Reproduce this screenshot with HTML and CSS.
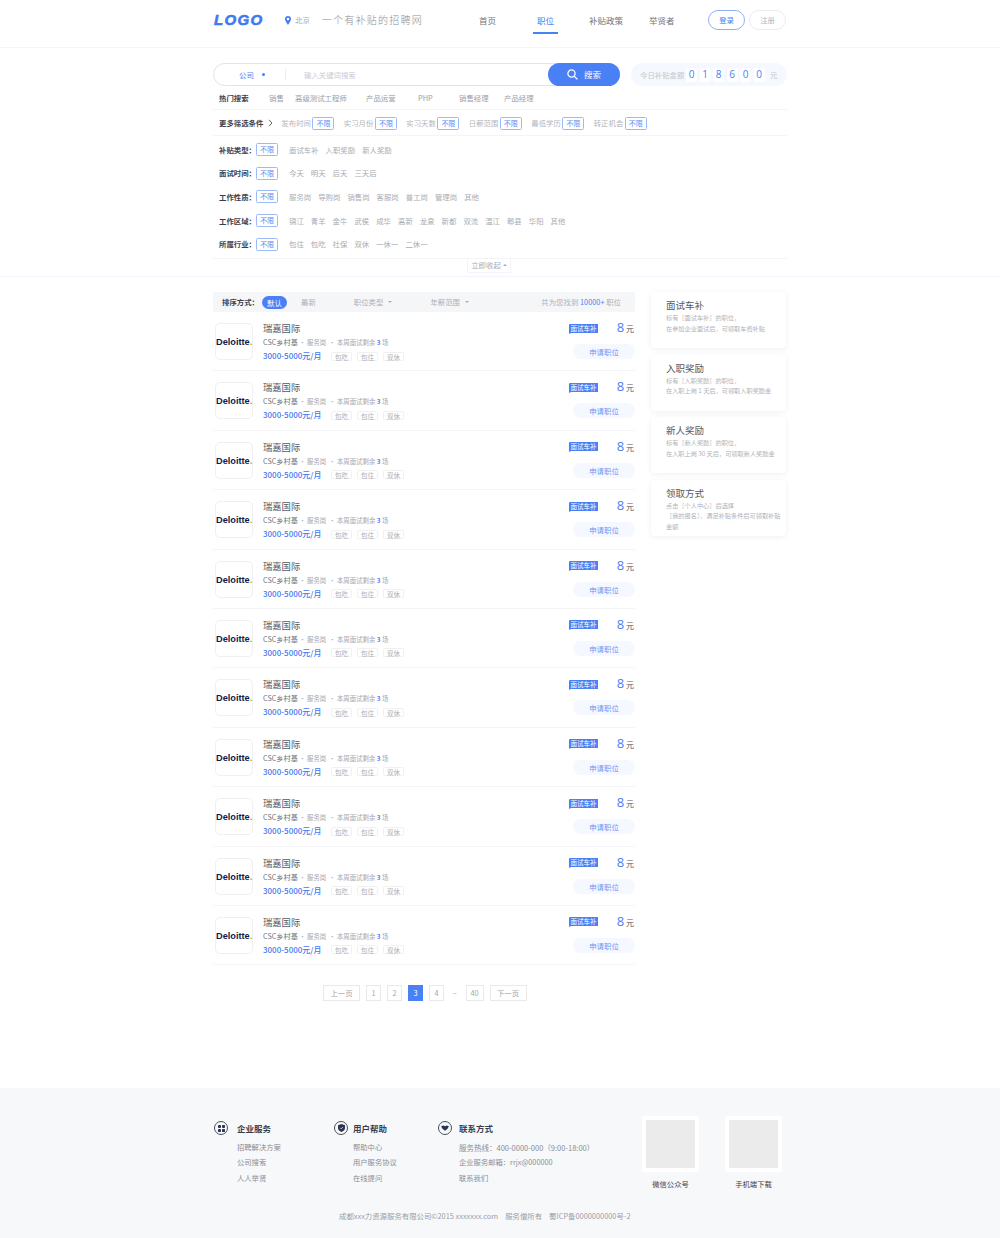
FILE: index.html
```html
<!DOCTYPE html>
<html lang="zh-CN">
<head>
    <meta charset="UTF-8">
    <title>职位</title>
    <link rel="stylesheet" href="styles.css">
</head>
<body>
<header class="top">
    <div class="wrap top_inner">
        <a class="logo">LOGO</a>
        <svg class="pin" width="6" height="9" viewBox="0 0 6 9"><path d="M3 0a3 3 0 0 0-3 3c0 2.2 3 6 3 6s3-3.800 3-6a3 3 0 0 0-3-3zm0 4.200a1.200 1.200 0 1 1 0-2.400 1.200 1.200 0 0 1 0 2.400z" fill="#4a80f5"/></svg>
        <span class="city">北京</span>
        <span class="slogan">一个有补贴的招聘网</span>
        <nav class="nav">
            <a class="nav_item">首页</a>
            <a class="nav_item active">职位</a>
            <a class="nav_item">补贴政策</a>
            <a class="nav_item">举贤者</a>
        </nav>
        <a class="top_btn login">登录</a>
        <a class="top_btn">注册</a>
    </div>
</header>

<section class="filters">
    <div class="wrap">
        <div class="search_row">
            <div class="search">
                <span class="search_type">公司<i class="dot"></i></span>
                <span class="search_text">输入关键词搜索</span>
                <a class="search_btn">
                    <svg width="11" height="11" viewBox="0 0 11 11" fill="none" stroke="#fff" stroke-width="1.300"><circle cx="4.500" cy="4.500" r="3.600"/><path d="M7.200 7.200 10.400 10.400"/></svg>
                    搜索
                </a>
            </div>
            <div class="today">
                <span class="today_label">今日补贴金额</span>
                <b class="digit">0</b><b class="digit">1</b><b class="digit">8</b><b class="digit">6</b><b class="digit">0</b><b class="digit">0</b>
                <span class="today_unit">元</span>
            </div>
        </div>

        <div class="hot">
            <b class="label">热门搜索</b>
            <a>销售</a>
            <a>高级测试工程师</a>
            <a>产品运营</a>
            <a>PHP</a>
            <a>销售经理</a>
            <a>产品经理</a>
        </div>

        <div class="more">
            <b class="label">更多筛选条件</b>
            <svg class="more_arrow" width="5" height="8" viewBox="0 0 5 8" fill="none" stroke="#555" stroke-width="0.900"><path d="M1 .8 4 4 1 7.200"/></svg>
            <span class="more_item">发布时间<i class="any">不限</i></span>
            <span class="more_item">实习月份<i class="any">不限</i></span>
            <span class="more_item">实习天数<i class="any">不限</i></span>
            <span class="more_item">日薪范围<i class="any">不限</i></span>
            <span class="more_item">最低学历<i class="any">不限</i></span>
            <span class="more_item">转正机会<i class="any">不限</i></span>
        </div>

        <div class="opts">
            <div class="opt_row">
                <b class="label opt_label">补贴类型：</b><i class="any">不限</i>
                <div class="opt_list"><a>面试车补</a><a>入职奖励</a><a>新人奖励</a></div>
            </div>
            <div class="opt_row">
                <b class="label opt_label">面试时间：</b><i class="any">不限</i>
                <div class="opt_list"><a>今天</a><a>明天</a><a>后天</a><a>三天后</a></div>
            </div>
            <div class="opt_row">
                <b class="label opt_label">工作性质：</b><i class="any">不限</i>
                <div class="opt_list"><a>服务岗</a><a>导购岗</a><a>销售岗</a><a>客服岗</a><a>普工岗</a><a>管理岗</a><a>其他</a></div>
            </div>
            <div class="opt_row">
                <b class="label opt_label">工作区域：</b><i class="any">不限</i>
                <div class="opt_list"><a>锦江</a><a>青羊</a><a>金牛</a><a>武侯</a><a>成华</a><a>高新</a><a>龙泉</a><a>新都</a><a>双流</a><a>温江</a><a>郫县</a><a>华阳</a><a>其他</a></div>
            </div>
            <div class="opt_row">
                <b class="label opt_label">所属行业：</b><i class="any">不限</i>
                <div class="opt_list"><a>包住</a><a>包吃</a><a>社保</a><a>双休</a><a>一休一</a><a>二休一</a></div>
            </div>
        </div>
        <div class="fold_line"><a class="fold">立即收起<i class="fold_arrow"></i></a></div>
    </div>
</section>

<main class="wrap content">
    <div class="jobs">
        <div class="sort">
            <b class="label sort_label">排序方式：</b>
            <span class="pill">默认</span>
            <a class="sort_new">最新</a>
            <a class="sort_drop">职位类型<i class="caret"></i></a>
            <a class="sort_drop">年薪范围<i class="caret"></i></a>
            <span class="sort_total">共为您找到 <em>10000+</em> 职位</span>
        </div>

        <article class="job">
            <div class="job_logo">Deloitte<span>.</span></div>
            <div class="job_info">
                <h3>瑞嘉国际</h3>
                <p class="job_sub"><span>CSC乡村基</span> · 服务岗 &nbsp;· 本周面试剩余 <em>3</em> 场</p>
                <div class="job_pay"><b>3000-5000元/月</b><i>包吃</i><i>包住</i><i>双休</i></div>
            </div>
            <div class="job_side">
                <div class="job_top"><span class="flag">面试车补</span><span class="money"><b>8</b> 元</span></div>
                <a class="apply">申请职位</a>
            </div>
        </article>
        <article class="job">
            <div class="job_logo">Deloitte<span>.</span></div>
            <div class="job_info">
                <h3>瑞嘉国际</h3>
                <p class="job_sub"><span>CSC乡村基</span> · 服务岗 &nbsp;· 本周面试剩余 <em>3</em> 场</p>
                <div class="job_pay"><b>3000-5000元/月</b><i>包吃</i><i>包住</i><i>双休</i></div>
            </div>
            <div class="job_side">
                <div class="job_top"><span class="flag">面试车补</span><span class="money"><b>8</b> 元</span></div>
                <a class="apply">申请职位</a>
            </div>
        </article>
        <article class="job">
            <div class="job_logo">Deloitte<span>.</span></div>
            <div class="job_info">
                <h3>瑞嘉国际</h3>
                <p class="job_sub"><span>CSC乡村基</span> · 服务岗 &nbsp;· 本周面试剩余 <em>3</em> 场</p>
                <div class="job_pay"><b>3000-5000元/月</b><i>包吃</i><i>包住</i><i>双休</i></div>
            </div>
            <div class="job_side">
                <div class="job_top"><span class="flag">面试车补</span><span class="money"><b>8</b> 元</span></div>
                <a class="apply">申请职位</a>
            </div>
        </article>
        <article class="job">
            <div class="job_logo">Deloitte<span>.</span></div>
            <div class="job_info">
                <h3>瑞嘉国际</h3>
                <p class="job_sub"><span>CSC乡村基</span> · 服务岗 &nbsp;· 本周面试剩余 <em>3</em> 场</p>
                <div class="job_pay"><b>3000-5000元/月</b><i>包吃</i><i>包住</i><i>双休</i></div>
            </div>
            <div class="job_side">
                <div class="job_top"><span class="flag">面试车补</span><span class="money"><b>8</b> 元</span></div>
                <a class="apply">申请职位</a>
            </div>
        </article>
        <article class="job">
            <div class="job_logo">Deloitte<span>.</span></div>
            <div class="job_info">
                <h3>瑞嘉国际</h3>
                <p class="job_sub"><span>CSC乡村基</span> · 服务岗 &nbsp;· 本周面试剩余 <em>3</em> 场</p>
                <div class="job_pay"><b>3000-5000元/月</b><i>包吃</i><i>包住</i><i>双休</i></div>
            </div>
            <div class="job_side">
                <div class="job_top"><span class="flag">面试车补</span><span class="money"><b>8</b> 元</span></div>
                <a class="apply">申请职位</a>
            </div>
        </article>
        <article class="job">
            <div class="job_logo">Deloitte<span>.</span></div>
            <div class="job_info">
                <h3>瑞嘉国际</h3>
                <p class="job_sub"><span>CSC乡村基</span> · 服务岗 &nbsp;· 本周面试剩余 <em>3</em> 场</p>
                <div class="job_pay"><b>3000-5000元/月</b><i>包吃</i><i>包住</i><i>双休</i></div>
            </div>
            <div class="job_side">
                <div class="job_top"><span class="flag">面试车补</span><span class="money"><b>8</b> 元</span></div>
                <a class="apply">申请职位</a>
            </div>
        </article>
        <article class="job">
            <div class="job_logo">Deloitte<span>.</span></div>
            <div class="job_info">
                <h3>瑞嘉国际</h3>
                <p class="job_sub"><span>CSC乡村基</span> · 服务岗 &nbsp;· 本周面试剩余 <em>3</em> 场</p>
                <div class="job_pay"><b>3000-5000元/月</b><i>包吃</i><i>包住</i><i>双休</i></div>
            </div>
            <div class="job_side">
                <div class="job_top"><span class="flag">面试车补</span><span class="money"><b>8</b> 元</span></div>
                <a class="apply">申请职位</a>
            </div>
        </article>
        <article class="job">
            <div class="job_logo">Deloitte<span>.</span></div>
            <div class="job_info">
                <h3>瑞嘉国际</h3>
                <p class="job_sub"><span>CSC乡村基</span> · 服务岗 &nbsp;· 本周面试剩余 <em>3</em> 场</p>
                <div class="job_pay"><b>3000-5000元/月</b><i>包吃</i><i>包住</i><i>双休</i></div>
            </div>
            <div class="job_side">
                <div class="job_top"><span class="flag">面试车补</span><span class="money"><b>8</b> 元</span></div>
                <a class="apply">申请职位</a>
            </div>
        </article>
        <article class="job">
            <div class="job_logo">Deloitte<span>.</span></div>
            <div class="job_info">
                <h3>瑞嘉国际</h3>
                <p class="job_sub"><span>CSC乡村基</span> · 服务岗 &nbsp;· 本周面试剩余 <em>3</em> 场</p>
                <div class="job_pay"><b>3000-5000元/月</b><i>包吃</i><i>包住</i><i>双休</i></div>
            </div>
            <div class="job_side">
                <div class="job_top"><span class="flag">面试车补</span><span class="money"><b>8</b> 元</span></div>
                <a class="apply">申请职位</a>
            </div>
        </article>
        <article class="job">
            <div class="job_logo">Deloitte<span>.</span></div>
            <div class="job_info">
                <h3>瑞嘉国际</h3>
                <p class="job_sub"><span>CSC乡村基</span> · 服务岗 &nbsp;· 本周面试剩余 <em>3</em> 场</p>
                <div class="job_pay"><b>3000-5000元/月</b><i>包吃</i><i>包住</i><i>双休</i></div>
            </div>
            <div class="job_side">
                <div class="job_top"><span class="flag">面试车补</span><span class="money"><b>8</b> 元</span></div>
                <a class="apply">申请职位</a>
            </div>
        </article>
        <article class="job">
            <div class="job_logo">Deloitte<span>.</span></div>
            <div class="job_info">
                <h3>瑞嘉国际</h3>
                <p class="job_sub"><span>CSC乡村基</span> · 服务岗 &nbsp;· 本周面试剩余 <em>3</em> 场</p>
                <div class="job_pay"><b>3000-5000元/月</b><i>包吃</i><i>包住</i><i>双休</i></div>
            </div>
            <div class="job_side">
                <div class="job_top"><span class="flag">面试车补</span><span class="money"><b>8</b> 元</span></div>
                <a class="apply">申请职位</a>
            </div>
        </article>

        <div class="pages">
            <a class="page wide">上一页</a>
            <a class="page">1</a>
            <a class="page">2</a>
            <a class="page current">3</a>
            <a class="page">4</a>
            <span class="page_gap">–</span>
            <a class="page forty">40</a>
            <a class="page wide">下一页</a>
        </div>
    </div>

    <aside class="side">
        <div class="card">
            <h4>面试车补</h4>
            <p>标有［面试车补］的职位，<br>在参加企业面试后，可领取车费补贴</p>
        </div>
        <div class="card">
            <h4>入职奖励</h4>
            <p>标有［入职奖励］的职位，<br>在入职上岗 1 天后，可领取入职奖励金</p>
        </div>
        <div class="card">
            <h4>新人奖励</h4>
            <p>标有［新人奖励］的职位，<br>在入职上岗 30 天后，可领取新人奖励金</p>
        </div>
        <div class="card">
            <h4>领取方式</h4>
            <p>点击［个人中心］后选择<br>［我的报名］，满足补贴条件后可领取补贴<br>金额</p>
        </div>
    </aside>
</main>

<footer class="foot">
    <div class="wrap">
        <div class="foot_top">
            <div class="foot_col first">
                <h5><span class="foot_icon"><svg width="7" height="7" viewBox="0 0 8 8" fill="#2b3350"><rect x="0" y="0" width="3.400" height="3.400" rx="1"/><rect x="4.600" y="0" width="3.400" height="3.400" rx="1"/><rect x="0" y="4.600" width="3.400" height="3.400" rx="1"/><rect x="4.600" y="4.600" width="3.400" height="3.400" rx="1"/></svg></span>企业服务</h5>
                <a>招聘解决方案</a>
                <a>公司搜索</a>
                <a>人人举贤</a>
            </div>
            <div class="foot_col second">
                <h5><span class="foot_icon"><svg width="7" height="8" viewBox="0 0 8 9"><path d="M4 0 8 1.300V4.500C8 7 6 8.300 4 9 2 8.300 0 7 0 4.500V1.300z" fill="#2b3350"/><path d="M2.500 4.300 3.700 5.500 5.600 3.400" fill="none" stroke="#fff" stroke-width=".8"/></svg></span>用户帮助</h5>
                <a>帮助中心</a>
                <a>用户服务协议</a>
                <a>在线提问</a>
            </div>
            <div class="foot_col third">
                <h5><span class="foot_icon"><svg width="8" height="6" viewBox="0 0 9 7"><path d="M0 1.500 2.500.5 4.500 1.500 6.500.5 9 1.500 7.500 4.500 4.500 6.800 1.500 4.500z" fill="#2b3350"/></svg></span>联系方式</h5>
                <a>服务热线：400-0000-000（9:00-18:00）</a>
                <a>企业服务邮箱：rrjx@000000</a>
                <a>联系我们</a>
            </div>
            <div class="qr first_qr">
                <div class="qr_box"><div class="qr_img"></div></div>
                <span>微信公众号</span>
            </div>
            <div class="qr">
                <div class="qr_box"><div class="qr_img"></div></div>
                <span>手机端下载</span>
            </div>
        </div>
        <p class="copy"><span>成都xxx力资源服务有限公司©2015 xxxxxxx.com</span><span>服务僧所有</span><span>蜀ICP备0000000000号-2</span></p>
    </div>
</footer>
</body>
</html>
```

FILE: styles.css
```css
* {
    box-sizing: border-box;
    margin: 0;
    padding: 0;
}
body {
    width: 1000px;
    background: #fff;
    font-family: "Noto Sans CJK SC", "Liberation Sans", sans-serif;
    font-size: 7.4px;
    line-height: 12px;
    color: #9a9da6;
}
i, em {
    font-style: normal;
}
.wrap {
    width: 574px;
    margin: 0 auto;
}
.label {
    font-weight: 700;
    color: #3a3f50;
}

/* header */
.top {
    height: 48px;
    border-bottom: 1px solid #f5f5f7;
}
.top_inner {
    display: flex;
    align-items: center;
    height: 40px;
    padding-left: 1px;
}
.logo {
    width: 50px;
    font-family: "Liberation Sans", sans-serif;
    font-size: 15px;
    font-weight: 700;
    font-style: italic;
    letter-spacing: 1.300px;
    color: #3f78f0;
    -webkit-text-stroke: 0.600px #3f78f0;
}
.pin {
    margin-left: 21px;
}
.city {
    margin-left: 4px;
    color: #a9abb2;
}
.slogan {
    margin-left: 12px;
    font-size: 10px;
    letter-spacing: 1.250px;
    color: #8b8d93;
    font-weight: 300;
}
.nav {
    display: grid;
    grid-template-columns: 54px 56px 60px 59px;
    margin-left: 56px;
    align-items: center;
}
.nav_item {
    justify-self: start;
    font-size: 8.500px;
    color: #70737c;
}
.nav_item.active {
    position: relative;
    padding: 0 4px;
    color: #4a80f5;
}
.nav_item.active::after {
    content: "";
    position: absolute;
    left: 0;
    right: 0;
    top: 18px;
    height: 1.500px;
    background: #4a80f5;
}
.top_btn {
    width: 37px;
    height: 20px;
    margin-left: 4px;
    border: 1px solid #ebecef;
    border-radius: 10px;
    font-size: 7.400px;
    line-height: 18px;
    text-align: center;
    color: #b4b6bc;
}
.top_btn.login {
    margin-left: 0;
    border-color: #8fb0f7;
    color: #4a80f5;
}

/* filters */
.filters {
    height: 229px;
    border-bottom: 1px solid #f1f5fd;
    padding-top: 15px;
}
.search_row {
    display: flex;
    justify-content: space-between;
    height: 23px;
    line-height: 11px;
}
.search {
    display: flex;
    align-items: center;
    width: 407px;
    border: 1px solid #e2e3e6;
    border-radius: 12px;
}
.search_type {
    display: flex;
    align-items: center;
    width: 72px;
    padding-left: 25px;
    border-right: 1px solid #ebecef;
    color: #4a80f5;
}
.dot {
    width: 3px;
    height: 3px;
    margin-left: 8px;
    border-radius: 50%;
    background: #4a80f5;
}
.search_text {
    margin-left: 18px;
    color: #c9cbd1;
}
.search_btn {
    display: flex;
    align-items: center;
    justify-content: center;
    gap: 6px;
    width: 72px;
    height: 23px;
    margin: 0 -1px 0 auto;
    border-radius: 12px;
    background: #4a80f5;
    font-size: 8.500px;
    color: #fff;
}
.today {
    display: flex;
    align-items: center;
    width: 156px;
    padding-left: 9px;
    border-radius: 12px;
    background: #f5f8fe;
    color: #c3c6cd;
}
.today_label {
    width: 46px;
}
.digit {
    width: 11px;
    height: 14px;
    margin-right: 2.500px;
    border-radius: 2px;
    background: #fff;
    font-family: "Open Sans", sans-serif;
    font-size: 10px;
    font-weight: 400;
    line-height: 13px;
    text-align: center;
    color: #4a80f5;
}
.today_unit {
    margin-left: 3px;
}
.hot {
    display: grid;
    grid-template-columns: 50px 26px 71px 52px 41px 45px auto;
    align-items: center;
    height: 24px;
    padding-left: 6px;
    border-bottom: 1px solid #f4f4f6;
}
.more {
    display: flex;
    align-items: center;
    height: 26px;
    padding: 1px 0 0 6px;
    border-bottom: 1px solid #f4f4f6;
}
.more_arrow {
    margin-left: 5px;
    margin-right: 8px;
}
.more_item {
    display: flex;
    align-items: center;
    gap: 1.500px;
    margin-right: 9.400px;
    color: #b4b6bc;
}
.any {
    width: 22px;
    height: 13px;
    border: 1px solid #9dbaf8;
    border-radius: 1.500px;
    font-size: 7px;
    line-height: 11px;
    text-align: center;
    color: #5b8cf6;
}
.opts {
    height: 122.500px;
    padding: 2px 0 0 6px;
    border-bottom: 1px solid #f4f4f6;
}
.opt_row {
    display: flex;
    align-items: center;
    height: 23.600px;
}
.opt_label {
    width: 37px;
    white-space: nowrap;
}
.opt_list {
    display: flex;
    gap: 7px;
    margin-left: 11px;
    color: #a9abb2;
}
.fold_line {
    display: flex;
    justify-content: center;
}
.fold {
    display: flex;
    align-items: center;
    gap: 2px;
    height: 14px;
    padding: 0 3px;
    border: 1px solid #f4f4f6;
    border-top: 0;
    margin-left: -22px;
    color: #a9abb2;
}
.fold_arrow {
    width: 0;
    height: 0;
    border-left: 2px solid transparent;
    border-right: 2px solid transparent;
    border-bottom: 2.500px solid #a9abb2;
}

/* list */
.content {
    display: flex;
    justify-content: space-between;
    padding-top: 15px;
    height: 811px;
}
.jobs {
    width: 422px;
}
.sort {
    display: flex;
    align-items: center;
    height: 20px;
    padding: 0 14px 0 9px;
    border-radius: 2px;
    background: #f5f6f8;
    color: #aeb0b7;
}
.sort_label {
    width: 40px;
    white-space: nowrap;
}
.pill {
    width: 25px;
    height: 13px;
    border-radius: 7px;
    background: #4a80f5;
    line-height: 13px;
    text-align: center;
    color: #fff;
}
.sort_new {
    margin-left: 14px;
}
.sort_drop {
    display: flex;
    align-items: center;
    margin-left: 38px;
}
.caret {
    width: 0;
    height: 0;
    margin-left: 5px;
    border-left: 2.500px solid transparent;
    border-right: 2.500px solid transparent;
    border-top: 2.500px solid #aeb0b7;
}
.sort_total {
    margin-left: auto;
}
.sort_total em {
    color: #4a80f5;
}
.job {
    display: flex;
    height: 59.400px;
    padding: 11px 0 0 2px;
    border-bottom: 1px solid #f4f4f6;
}
.job_logo {
    width: 38px;
    height: 37px;
    border: 1px solid #f0f0f2;
    border-radius: 5px;
    font-family: "Liberation Sans", sans-serif;
    font-size: 9.200px;
    font-weight: 700;
    line-height: 36px;
    text-align: center;
    color: #101b4d;
}
.job_logo span {
    color: #86bc25;
}
.job_info {
    margin-left: 10px;
}
.job_info h3 {
    height: 12px;
    margin-top: -1px;
    font-size: 9.300px;
    font-weight: 400;
    line-height: 12px;
    color: #55585f;
}
.job_sub {
    margin-top: 2px;
    font-size: 6.400px;
    color: #a4a6ad;
    white-space: nowrap;
}
.job_sub span {
    font-size: 7.200px;
    color: #70737c;
}
.job_sub em {
    font-weight: 700;
    color: #4a80f5;
}
.job_pay {
    display: flex;
    align-items: center;
    gap: 5px;
    margin-top: 1px;
}
.job_pay b {
    width: 63px;
    font-size: 8px;
    font-weight: 500;
    color: #3f78f0;
    white-space: nowrap;
}
.job_pay i {
    width: 21px;
    height: 9px;
    border: 1px solid #f0f0f2;
    border-radius: 1.500px;
    font-size: 6.500px;
    line-height: 8px;
    text-align: center;
    color: #aeb0b7;
}
.job_side {
    width: 66px;
    margin-left: auto;
}
.job_top {
    display: flex;
    align-items: center;
    height: 12px;
    margin-top: -1px;
}
.flag {
    position: relative;
    width: 29px;
    height: 9px;
    border-radius: 1px 0 0 0;
    background: #4a80f5;
    font-size: 6.500px;
    line-height: 9px;
    text-align: center;
    color: #fff;
}
.flag::after {
    content: "";
    position: absolute;
    left: 0;
    top: 9px;
    border-top: 1.500px solid #4a80f5;
    border-right: 2px solid transparent;
}
.money {
    margin: 0 1px 0 auto;
    color: #55585f;
    font-size: 8px;
}
.money b {
    font-family: "Open Sans", sans-serif;
    font-size: 13px;
    font-weight: 400;
    color: #4a80f5;
}
.apply {
    display: block;
    width: 62px;
    height: 15px;
    margin: 10px 0 0 4px;
    border-radius: 8px;
    background: #f5f8fe;
    line-height: 15px;
    text-align: center;
    color: #6c97f6;
}
.pages {
    display: flex;
    align-items: center;
    gap: 6px;
    margin: 20px 0 0 110px;
}
.page {
    width: 15px;
    height: 16px;
    border: 1px solid #e9e9ec;
    font-size: 7.400px;
    line-height: 14px;
    text-align: center;
    color: #a4a6ad;
}
.page.wide {
    width: 37px;
}
.page.forty {
    width: 18px;
}
.page.current {
    border-color: #4a80f5;
    background: #4a80f5;
    color: #fff;
}
.page_gap {
    width: 9.500px;
    text-align: center;
}
.side {
    width: 135px;
    margin-right: 1px;
}
.card {
    height: 56px;
    margin-bottom: 6.500px;
    padding: 7px 10px 0 15px;
    border-radius: 4px;
    box-shadow: 0 1px 5px rgba(80, 110, 180, 0.100);
}
.card h4 {
    font-size: 9.500px;
    font-weight: 400;
    line-height: 12px;
    color: #55585f;
}
.card p {
    margin-top: 2px;
    font-size: 6.200px;
    line-height: 10.500px;
    color: #b0b2b8;
    white-space: nowrap;
}

/* footer */
.foot {
    height: 150px;
    padding-top: 28px;
    background: #f7f8fa;
}
.foot_top {
    display: flex;
    height: 94px;
}
.foot_col {
    padding-top: 6px;
}
.foot_col h5 {
    position: relative;
    height: 12px;
    margin-bottom: 5.500px;
    font-size: 8.500px;
    font-weight: 700;
    line-height: 12px;
    color: #3a3f50;
}
.foot_col a {
    display: block;
    height: 15.500px;
    font-size: 7.300px;
    line-height: 15.500px;
    color: #8a8d96;
    white-space: nowrap;
}
.foot_icon {
    position: absolute;
    left: -23px;
    top: -1px;
    display: flex;
    align-items: center;
    justify-content: center;
    width: 14px;
    height: 14px;
    border: 0.800px solid #4a4f60;
    border-radius: 50%;
}
.first {
    width: 116px;
    margin-left: 24px;
}
.second {
    width: 106px;
}
.second .foot_icon {
    left: -19px;
}
.third {
    width: 183px;
}
.third .foot_icon {
    left: -21px;
}
.third a:first-of-type {
    font-size: 7.500px;
}
.qr {
    width: 57px;
    margin-left: 26px;
    text-align: center;
    font-size: 7.300px;
    color: #3a3f50;
}
.first_qr {
    margin-left: 0;
}
.qr_box {
    height: 56px;
    margin-bottom: 6px;
    padding: 4px;
    background: #fff;
}
.qr_img {
    height: 48px;
    background: #ebebeb;
}
.copy {
    display: flex;
    gap: 7px;
    padding-left: 126px;
    color: #9a9da6;
    white-space: nowrap;
}
```
